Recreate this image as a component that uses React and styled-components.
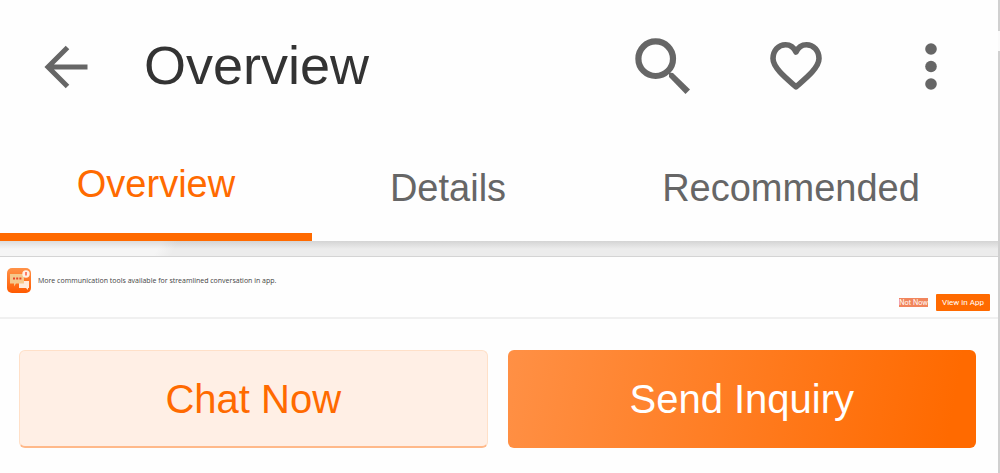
import React, { useState } from "react";
import styled, { createGlobalStyle } from "styled-components";

const GlobalStyle = createGlobalStyle`
  * {
    box-sizing: border-box;
  }

  body {
    margin: 0;
    background: #fefefe;
    font-family: "Liberation Sans", Arial, sans-serif;
  }

  button {
    font-family: inherit;
    cursor: pointer;
  }
`;

const Page = styled.div`
  min-height: 100vh;
  padding-right: 2px;
  background:
    linear-gradient(#d0d0d0 31px, #fafafa 31px 51px, #d0d0d0 51px) right / 2px 100% no-repeat,
    #fefefe;
`;

const Header = styled.header`
  display: flex;
  align-items: center;
  height: 132px;
  padding: 0 37px 0 40px;
`;

const Title = styled.h1`
  flex: 1;
  margin: 0 0 0 52px;
  padding-bottom: 2px;
  color: #333;
  font-size: 54px;
  font-weight: 400;
  line-height: 64px;
`;

const Actions = styled.div`
  display: flex;
  gap: 76px;
`;

const IconButton = styled.button`
  display: flex;
  align-items: center;
  justify-content: center;
  width: ${({ $width }) => $width}px;
  height: 60px;
  padding: 0;
  border: none;
  background: none;
  color: #666;
`;

const Tabs = styled.nav`
  display: grid;
  grid-template-columns: 312fr 272fr 414fr;
  height: 109px;
`;

const Tab = styled.a`
  display: flex;
  align-items: center;
  justify-content: center;
  padding-top: 2px;
  border-bottom: ${({ $active }) => ($active ? "8px solid #ff6a00" : "none")};
  color: ${({ $active }) => ($active ? "#ff6a00" : "#666")};
  font-size: 38px;
  line-height: 48px;
  text-decoration: none;
`;

const Divider = styled.div`
  height: 16px;
  border-bottom: 1px solid #d4d4d4;
  background:
    linear-gradient(#0000001a, #00000000 8px),
    linear-gradient(120deg, #f5f5f5 140px, #ececec 155px);
`;

const Banner = styled.section`
  height: 62px;
  padding: 11px 8px 7px 7px;
  border-bottom: 2px solid #f0f0f0;
`;

const Message = styled.div`
  display: flex;
  align-items: center;
  gap: 7px;

  p {
    margin: 0;
    color: #444;
    font-family: "Open Sans", "Liberation Sans", sans-serif;
    font-size: 7px;
    line-height: 10px;
  }
`;

const BannerActions = styled.div`
  display: flex;
  align-items: center;
  justify-content: flex-end;
  gap: 8px;
  padding-top: 1px;
`;

const NotNow = styled.button`
  height: 9px;
  padding: 0;
  border: none;
  background: #f1855c;
  color: #fff;
  font-family: Inter, sans-serif;
  font-size: 7px;
  line-height: 9px;
`;

const ViewInApp = styled.button`
  width: 54px;
  height: 17px;
  padding: 0;
  border: none;
  border-radius: 1px;
  background: #ff6a00;
  color: #fff;
  font-family: Roboto, sans-serif;
  font-size: 8px;
`;

const Footer = styled.footer`
  display: grid;
  grid-template-columns: 1fr 1fr;
  gap: 20px;
  padding: 31px 22px 25px 19px;
`;

const BigButton = styled.button`
  height: 98px;
  padding: 0;
  border: 1px solid #ffe0c8;
  border-bottom: 2px solid #ffb98a;
  border-radius: 6px;
  background: #ffefe5;
  color: #ff6a00;
  font-size: 40px;
  line-height: 48px;
`;

const PrimaryButton = styled(BigButton)`
  border: none;
  background: linear-gradient(100deg, #ff9045, #ff6a00 94%);
  color: #fff;
`;

const tabs = ["Overview", "Details", "Recommended"];

const BackIcon = () => (
  <svg width="44" height="46" viewBox="0 0 44 46" fill="none" stroke="currentColor" strokeWidth="5" aria-hidden="true">
    <path d="M23.5 4.5 4 24l19.5 19.5M4 24h39.5" />
  </svg>
);

const SearchIcon = () => (
  <svg width="56" height="56" viewBox="0 0 56 56" fill="none" stroke="currentColor" aria-hidden="true">
    <circle cx="20.7" cy="20.7" r="17.3" strokeWidth="6.2" />
    <path d="m34 34.5 4 .5 17 16.5-4.5 4.5L34 39z" fill="currentColor" stroke="none" />
  </svg>
);

const HeartIcon = () => (
  <svg width="54" height="50" viewBox="0 0 54 50" fill="none" stroke="currentColor" strokeWidth="5.6" strokeLinejoin="round" aria-hidden="true">
    <path d="M26 45.8C17 38 3 27 3 17.6 3 9.5 8.5 3.7 15.5 3.7c4.5 0 8.5 2.8 10.5 7.3 2-4.5 6-7.3 10.5-7.3C43.5 3.7 49 9.5 49 17.6 49 27 35 38 26 45.8Z" />
  </svg>
);

const MoreIcon = () => (
  <svg width="12" height="48" viewBox="0 0 12 48" fill="currentColor" aria-hidden="true">
    <circle cx="6" cy="7" r="5.8" />
    <circle cx="6" cy="24.5" r="5.8" />
    <circle cx="6" cy="42" r="5.8" />
  </svg>
);

const ChatLogo = () => (
  <svg width="24" height="25" viewBox="0 0 24 25" aria-hidden="true">
    <defs>
      <linearGradient id="logo" x1="0" y1="0" x2="0" y2="1">
        <stop offset="0" stopColor="#ff9248" />
        <stop offset="1" stopColor="#ff5a00" />
      </linearGradient>
    </defs>
    <rect width="24" height="25" rx="5" fill="url(#logo)" />
    <path d="M12 13h10v7h-1v2l-2-2h-7z" fill="#ffeadb" />
    <path d="M3 6h14v9.5H9l-2 3v-3H3z" fill="#f5c98c" />
    <path d="M6 10.5h2M9.2 10.5h2M12.4 10.5h2" stroke="#e8442a" strokeWidth="2" />
    <circle cx="19" cy="6" r="3.7" fill="#fff0e6" />
    <path d="M19 4v3.5" stroke="#ff5a3c" strokeWidth="1.5" />
  </svg>
);

const App = () => {
  const [activeTab, setActiveTab] = useState("Overview");
  const [showBanner, setShowBanner] = useState(true);

  return (
    <Page>
      <GlobalStyle />
      <Header>
        <IconButton $width={52} aria-label="Back">
          <BackIcon />
        </IconButton>
        <Title>Overview</Title>
        <Actions>
          <IconButton $width={60} aria-label="Search">
            <SearchIcon />
          </IconButton>
          <IconButton $width={56} aria-label="Favorite">
            <HeartIcon />
          </IconButton>
          <IconButton $width={60} aria-label="More">
            <MoreIcon />
          </IconButton>
        </Actions>
      </Header>
      <Tabs>
        {tabs.map((tab) => (
          <Tab
            key={tab}
            href={`#${tab.toLowerCase()}`}
            $active={tab === activeTab}
            onClick={() => setActiveTab(tab)}>
            {tab}
          </Tab>
        ))}
      </Tabs>
      <Divider />
      {showBanner && (
        <Banner>
          <Message>
            <ChatLogo />
            <p>More communication tools available for streamlined conversation in app.</p>
          </Message>
          <BannerActions>
            <NotNow onClick={() => setShowBanner(false)}>Not Now</NotNow>
            <ViewInApp>View in App</ViewInApp>
          </BannerActions>
        </Banner>
      )}
      <Footer>
        <BigButton>Chat Now</BigButton>
        <PrimaryButton>Send Inquiry</PrimaryButton>
      </Footer>
    </Page>
  );
};

export default App;
